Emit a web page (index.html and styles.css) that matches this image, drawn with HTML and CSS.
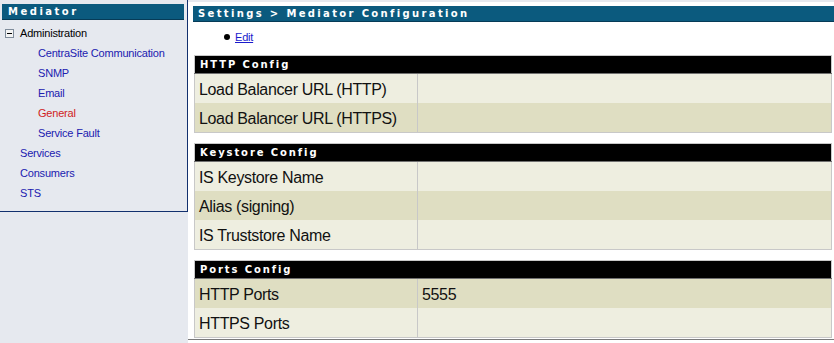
FILE: index.html
```html
<!DOCTYPE html>
<html lang="en">
<head>
  <meta charset="UTF-8" />
  <title>Mediator Configuration</title>
  <link rel="stylesheet" href="styles.css">
</head>
<body>
  <div class="frame">
    <div class="sidebar">
      <div class="panel-title">Mediator</div>
      <ul class="tree">
        <li>
          <span class="toggle">
            <svg width="9" height="9" viewBox="0 0 9 9">
              <rect x="0.5" y="0.5" width="8" height="8" fill="#f4f4f4" stroke="#7f8c9a" />
              <line x1="2" y1="4.5" x2="7" y2="4.5" stroke="#000" />
            </svg>
          </span>Administration
          <ul>
            <li><a href="#">CentraSite Communication</a></li>
            <li><a href="#">SNMP</a></li>
            <li><a href="#">Email</a></li>
            <li><a href="#" class="current">General</a></li>
            <li><a href="#">Service Fault</a></li>
          </ul>
        </li>
        <li><a href="#">Services</a></li>
        <li><a href="#">Consumers</a></li>
        <li><a href="#">STS</a></li>
      </ul>
    </div>

    <div class="main">
      <div class="pane">
        <div class="page-title">Settings &gt; Mediator Configuration</div>
        <ul class="actions">
          <li><a href="#">Edit</a></li>
        </ul>

        <table class="config">
          <tr><th colspan="2">HTTP Config</th></tr>
          <tr class="odd"><td class="label">Load Balancer URL (HTTP)</td><td></td></tr>
          <tr class="even"><td class="label">Load Balancer URL (HTTPS)</td><td></td></tr>
        </table>

        <table class="config">
          <tr><th colspan="2">Keystore Config</th></tr>
          <tr class="odd"><td class="label">IS Keystore Name</td><td></td></tr>
          <tr class="even"><td class="label">Alias (signing)</td><td></td></tr>
          <tr class="odd"><td class="label">IS Truststore Name</td><td></td></tr>
        </table>

        <table class="config">
          <tr><th colspan="2">Ports Config</th></tr>
          <tr class="even"><td class="label">HTTP Ports</td><td>5555</td></tr>
          <tr class="odd"><td class="label">HTTPS Ports</td><td></td></tr>
        </table>
      </div>
    </div>
  </div>
</body>
</html>
```

FILE: styles.css
```css
body {
  margin: 0;
  background-color: #e6e9ef;
  font-family: Tahoma, "Liberation Sans", Arial, sans-serif;
  font-size: 11px;
  color: #000;
}
.frame {
  display: flex;
  min-height: 100vh;
}

/* ==== SIDEBAR ==== */
.sidebar {
  align-self: flex-start;
  width: 182px;
  padding: 4px 3px 8px 2px;
  border-right: 1px solid #12306e;
  border-bottom: 1px solid #12306e;
}
.panel-title {
  height: 15px;
  line-height: 15px;
  padding-left: 6px;
  background-color: #0b5a7e;
  border-bottom: 1px solid #063b57;
  color: #fff;
  font-family: Verdana, "DejaVu Sans", sans-serif;
  font-size: 10px;
  font-weight: bold;
  letter-spacing: 2.5px;
}
.tree {
  list-style: none;
  margin: 3px 0 0;
  padding: 0;
  letter-spacing: -0.2px;
}
.tree li {
  line-height: 20px;
  padding-left: 18px;
}
.tree ul {
  list-style: none;
  margin: 0;
  padding-left: 18px;
}
.tree ul li {
  padding-left: 0;
}
.tree a {
  color: #2020b0;
  text-decoration: none;
}
.tree a.current {
  color: #d01c1c;
}
.toggle {
  display: inline-block;
  width: 9px;
  height: 9px;
  margin-left: -15px;
  margin-right: 6px;
  vertical-align: -1px;
}
.toggle svg {
  display: block;
}

/* ==== MAIN ==== */
.main {
  flex: 1;
  margin-top: 2px;
  background-color: #fff;
}
.pane {
  padding: 4px 2px 1px 5px;
  border-bottom: 1px solid #7a7a7a;
}
.page-title {
  height: 15px;
  line-height: 15px;
  margin-right: -2px;
  padding-left: 5px;
  background-color: #0b5a7e;
  border-bottom: 1px solid #063b57;
  color: #fff;
  font-family: Verdana, "DejaVu Sans", sans-serif;
  font-size: 10px;
  font-weight: bold;
  letter-spacing: 2.35px;
}
.actions {
  list-style: none;
  margin: 7px 0 10px;
  padding-left: 31px;
  line-height: 16px;
  letter-spacing: -0.2px;
}
.actions li::before {
  content: "";
  display: inline-block;
  width: 6px;
  height: 6px;
  margin-right: 5px;
  border-radius: 50%;
  background-color: #000;
  vertical-align: 1px;
}
.actions a {
  color: #1a1acc;
}

/* config tables */
.config {
  width: calc(100% - 1px);
  margin: 0 0 10px 1px;
  border-collapse: collapse;
  border: 1px solid #c8c8c8;
  font-size: 16px;
  letter-spacing: -0.35px;
}
.config:last-child {
  margin-bottom: 0;
}
.config th {
  height: 17px;
  padding: 0 0 0 5px;
  background-color: #000;
  border-bottom: 1px solid #707070;
  color: #fff;
  text-align: left;
  font-family: Verdana, "DejaVu Sans", sans-serif;
  font-size: 10px;
  font-weight: bold;
  letter-spacing: 1.9px;
  line-height: 17px;
}
.config td {
  height: 27px;
  padding: 2px 4px 0;
  color: #111;
}
.config td.label {
  width: 214px;
  border-right: 1px solid #c8c8c8;
}
.config tr.odd td {
  background-color: #eeeee0;
}
.config tr.even td {
  background-color: #dfdec2;
}
```
